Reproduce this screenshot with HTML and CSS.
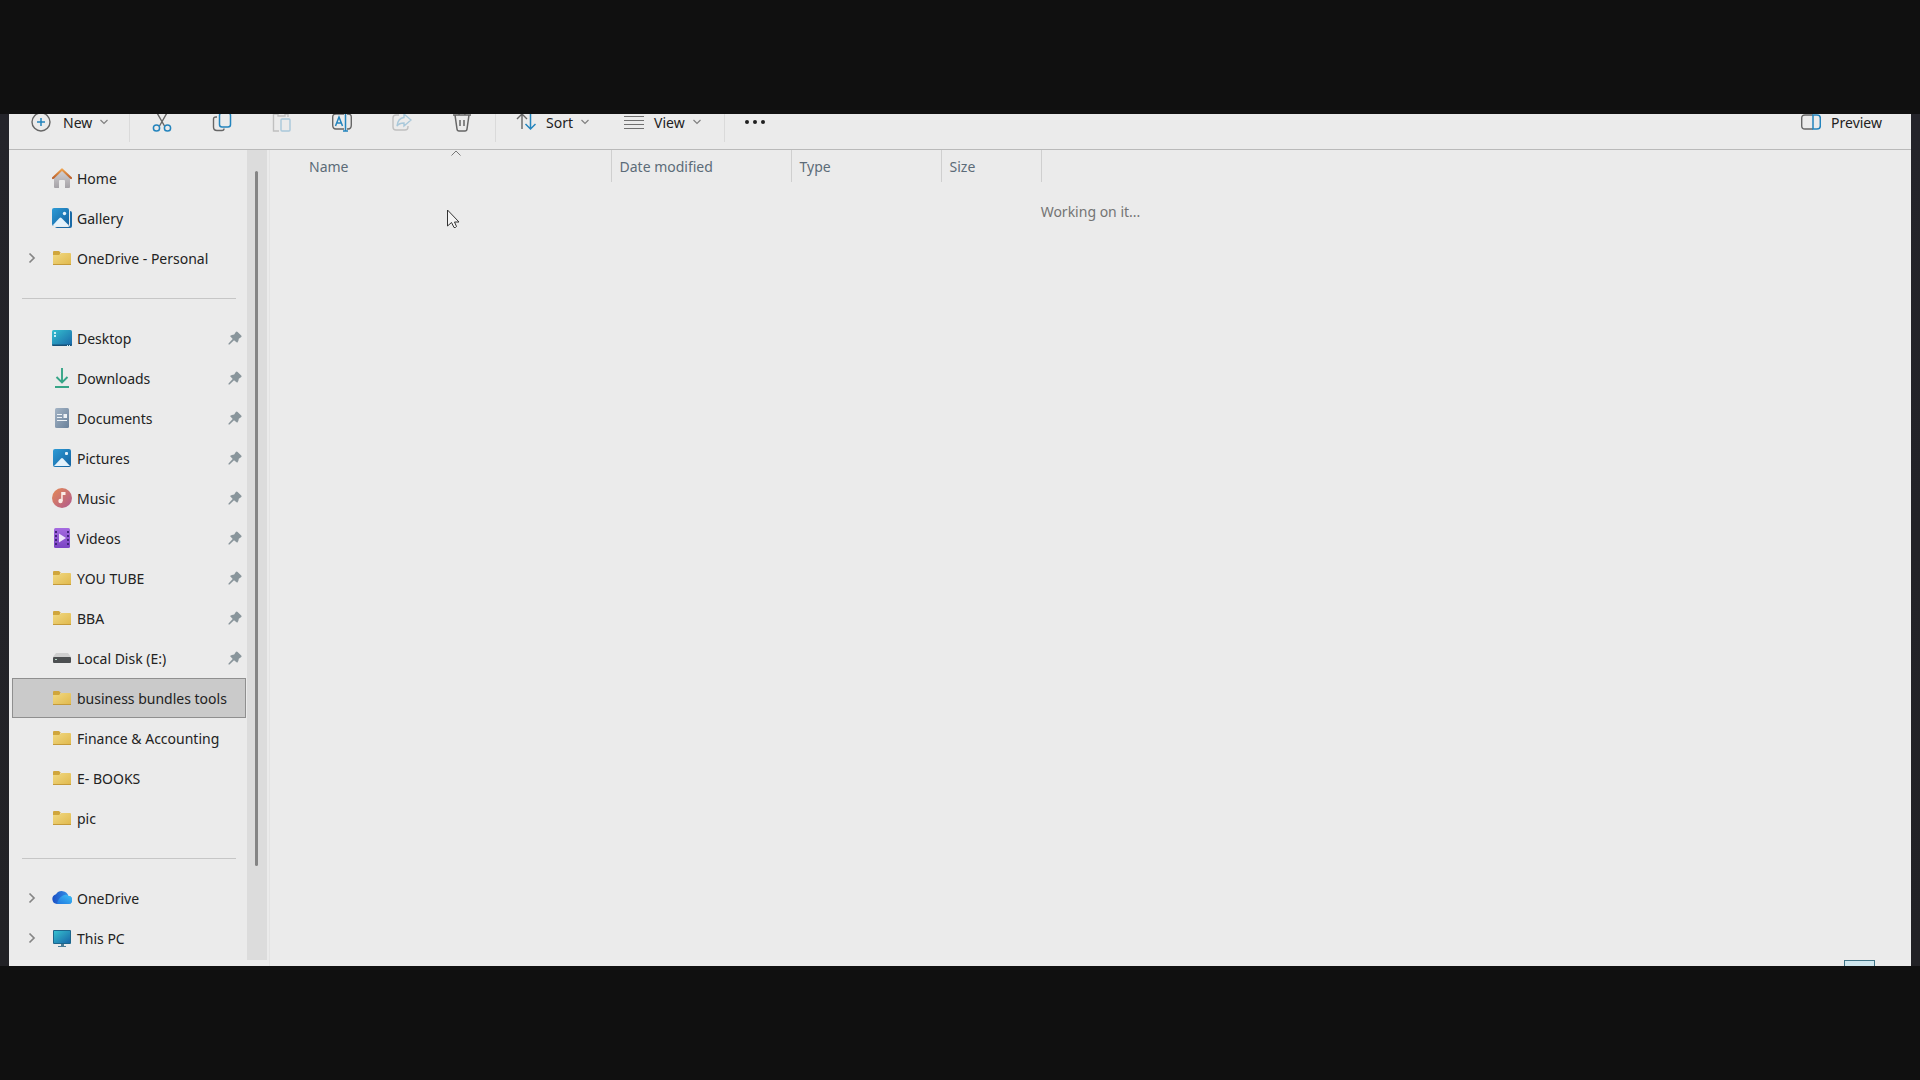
FILE: index.html
```html
<!DOCTYPE html>
<html lang="en">
<head>
<meta charset="utf-8">
<title>business bundles tools</title>
<link rel="stylesheet" href="styles.css">
</head>
<body>
<svg class="defs" aria-hidden="true">
  <defs>
    <linearGradient id="g-folder" x1="0" y1="0" x2="1" y2="1"><stop offset="0" stop-color="#f1d982"/><stop offset="1" stop-color="#e0b84c"/></linearGradient>
    <linearGradient id="g-blue" x1="0" y1="0" x2="1" y2="1"><stop offset="0" stop-color="#2d9bd6"/><stop offset="1" stop-color="#14619f"/></linearGradient>
    <linearGradient id="g-desk" x1="0" y1="0" x2="1" y2="1"><stop offset="0" stop-color="#35c0cf"/><stop offset="1" stop-color="#1866a8"/></linearGradient>
    <linearGradient id="g-wall" x1="0" y1="0" x2="0" y2="1"><stop offset="0" stop-color="#d4d2d4"/><stop offset="1" stop-color="#a5a2a7"/></linearGradient>
    <linearGradient id="g-roof" x1="0" y1="0" x2="0" y2="1"><stop offset="0" stop-color="#eda04c"/><stop offset="1" stop-color="#bb612c"/></linearGradient>
    <linearGradient id="g-doc" x1="0" y1="0" x2="1" y2="1"><stop offset="0" stop-color="#a4b4c5"/><stop offset="1" stop-color="#68809a"/></linearGradient>
    <linearGradient id="g-music" x1="0" y1="0" x2="1" y2="1"><stop offset="0" stop-color="#e58a54"/><stop offset="1" stop-color="#b05a8f"/></linearGradient>
    <linearGradient id="g-video" x1="0" y1="0" x2="0" y2="1"><stop offset="0" stop-color="#a56be0"/><stop offset="1" stop-color="#7a43c4"/></linearGradient>
    <linearGradient id="g-cloud" x1="0" y1="0" x2="1" y2="0"><stop offset="0" stop-color="#1a4fc4"/><stop offset="1" stop-color="#3aa0f0"/></linearGradient>
    <linearGradient id="g-cloud2" x1="0" y1="1" x2="1" y2="0"><stop offset="0" stop-color="#2176e0"/><stop offset="1" stop-color="#3cc0f5"/></linearGradient>
    <symbol id="folder" viewBox="0 0 20 20"><path d="M1 4q0-1 1-1h5l2 2h-1v4H1z" fill="#d0a63c"/><path d="M1 7h6l2-2h9q1 0 1 1v10q0 1-1 1H2q-1 0-1-1z" fill="url(#g-folder)"/><path d="M1 16.500h18" stroke="#c49a3a"/></symbol>
    <symbol id="home" viewBox="0 0 20 20"><path d="M2 9l8-7 8 7v10q0 1-1 1h-4v-7q0-1-1-1H8q-1 0-1 1v7H3q-1 0-1-1z" fill="url(#g-wall)"/><path d="M1 10l9-8.500L19 10" fill="none" stroke="url(#g-roof)" stroke-width="2.200" stroke-linecap="round" stroke-linejoin="round"/></symbol>
    <symbol id="gallery" viewBox="0 0 20 20"><path d="M18 3q2 0 2 2v13q0 2-2 2H5q-2 0-2-2z" fill="#1a6aa6"/><rect width="18" height="19" rx="2" fill="#ebebeb"/><rect width="17" height="18" rx="2" fill="url(#g-blue)"/><path d="M1 17l6.500-7q1-1 2 0l7 7-.5 1H1.500z" fill="#e4f2fb"/><circle cx="12.500" cy="5.500" r="1.700" fill="#e4f2fb"/></symbol>
    <symbol id="desktop" viewBox="0 0 20 20"><rect y="2" width="20" height="16" rx="1.500" fill="url(#g-desk)"/><path d="M0 16.500h20q0 1.500-1.500 1.500h-17q-1.500 0-1.500-1.500z" fill="#175077"/><path d="M2 4h2v2H2zM2 7h2v2H2zM15 17h1v1h-1zM17 17h1v1h-1z" fill="#c8eef5"/></symbol>
    <symbol id="downloads" viewBox="0 0 20 20"><path d="M10 0v14M4.500 9l5.500 5.500L15.500 9M3 19h14" fill="none" stroke="#36a587" stroke-width="1.900"/></symbol>
    <symbol id="documents" viewBox="0 0 20 20"><rect x="3" width="14" height="20" rx="1.500" fill="url(#g-doc)"/><path d="M5 6.500h5M5 9.500h5M5 12.500h10" stroke="#eef2f6"/><path d="M11.500 6H15v4h-3.500z" fill="#eef2f6"/></symbol>
    <symbol id="pictures" viewBox="0 0 20 20"><rect x="1" y="1" width="18" height="18" rx="2" fill="url(#g-blue)"/><path d="M2 18l7-7.500q1-1 2 0l7 7.500z" fill="#e4f2fb"/><rect x="13" y="4" width="3" height="3" rx="1" fill="#e4f2fb"/></symbol>
    <symbol id="music" viewBox="0 0 20 20"><circle cx="10" cy="10" r="10" fill="url(#g-music)"/><circle cx="8.500" cy="13" r="2.200" fill="#fbeee8"/><path d="M9.200 4h4.300v3h-2.800v6H9.200z" fill="#fbeee8"/></symbol>
    <symbol id="videos" viewBox="0 0 20 20"><rect x="2" width="16" height="20" rx="1.500" fill="url(#g-video)"/><path d="M4 3v16M16 3v16" stroke="#41247c" stroke-width="2" stroke-dasharray="2 2"/><path d="M7 5.500l7 4.500-7 4.500z" fill="#eee4fa"/></symbol>
    <symbol id="disk" viewBox="0 0 20 20"><path d="M4 5h12l3 4H1z" fill="#cfcfcf"/><rect x="1" y="9" width="18" height="6" rx="1" fill="#4c4f51"/><path d="M3 11.500h2" stroke="#b6d8c4"/></symbol>
    <symbol id="cloud" viewBox="0 0 20 20"><path d="M5 16a5 5 0 0 1-1-9.800A7 7 0 0 1 16.500 8 4 4 0 0 1 16 16z" fill="url(#g-cloud)"/><path d="M5 16q1-6 6-8.500Q14 6 16.500 8a4 4 0 0 1-.5 8z" fill="url(#g-cloud2)"/></symbol>
    <symbol id="pc" viewBox="0 0 20 20"><path d="M9 16h3v2h2v1H6v-1h3z" fill="#4c7d96"/><rect x="1" y="2" width="18" height="14" rx="1" fill="#1d668c"/><rect x="2" y="3" width="16" height="12" fill="url(#g-desk)"/></symbol>
    <symbol id="pin" viewBox="0 0 14 14"><path d="M7.800 1q.9-1 1.800 0l3.600 3.500q.9.900-.2 1.800L10.800 7.800q-.1 2.400-1.600 4L6 9.300 1.500 13.500H.5v-1L4.700 8 2 5q1.800-1.500 4.200-1.500z" fill="#89959b"/></symbol>
    <symbol id="right" viewBox="0 0 8 12"><path d="M1.500 1.500L6 6l-4.500 4.500" fill="none" stroke="#858585" stroke-width="1.700"/></symbol>
    <symbol id="down" viewBox="0 0 8 6"><path d="M.5 1L4 4.500 7.500 1" fill="none" stroke="#808080" stroke-width="1.200"/></symbol>
  </defs>
</svg>
<main class="window">
  <div class="toolbar" role="toolbar" aria-label="Commands">
    <button class="tool tool-new"><svg class="icon" viewBox="0 0 20 20"><circle cx="10" cy="10" r="9" fill="none" stroke="#666" stroke-width="1.400"/><path d="M10 6v8M6 10h8" stroke="#2384bd" stroke-width="1.500"/></svg><span class="label">New</span><svg class="down"><use href="#down"/></svg></button>
    <span class="rule"></span>
    <button class="tool tool-icon" aria-label="Cut"><svg class="icon" viewBox="0 0 20 20"><path d="M4.500 0l8 14M15.500 0l-8 14" stroke="#666" stroke-width="1.400"/><g fill="none" stroke="#2384bd" stroke-width="1.500"><circle cx="4.500" cy="16" r="3.100"/><circle cx="15.500" cy="16" r="3.100"/></g></svg></button>
    <button class="tool tool-icon" aria-label="Copy"><svg class="icon" viewBox="0 0 20 20"><path d="M5 5H4Q1.500 5 1.500 7v8q0 3.500 3.500 3.500h5q2 0 2-2" fill="none" stroke="#666" stroke-width="1.400"/><rect x="7.500" y="1" width="11" height="14" rx="2.500" fill="none" stroke="#2384bd" stroke-width="1.500"/></svg></button>
    <button class="tool tool-icon" aria-label="Paste" disabled><svg class="icon" viewBox="0 0 20 20"><path d="M6 2H1.500v17H7M6 1v3h7V1M13 2h3v3" fill="none" stroke="#c0c0c0" stroke-width="1.400"/><rect x="9" y="7" width="9" height="12" rx="1" fill="none" stroke="#a9c8da" stroke-width="1.400"/></svg></button>
    <button class="tool tool-icon" aria-label="Rename"><svg class="icon" viewBox="0 0 20 20"><path d="M12 2H4Q.7 2 .7 5v8q0 4 3.300 4h8M15 2h1q3.300 0 3.300 3v8q0 4-3.300 4h-1" fill="none" stroke="#666" stroke-width="1.400"/><path d="M3.500 14L7 5l3.500 9M4.700 11h4.600M13.500 1v18M11 19h5M11 1h5" fill="none" stroke="#2384bd" stroke-width="1.500"/></svg></button>
    <button class="tool tool-icon" aria-label="Share" disabled><svg class="icon" viewBox="0 0 20 20"><path d="M7 3H4Q1 3 1 6v9q0 3 3 3h9q3 0 3-3v-1" fill="none" stroke="#c0c0c0" stroke-width="1.400"/><path d="M12 2l7 6-7 6v-3q-5 0-7 3 1-8 7-8.500z" fill="none" stroke="#a9c8da" stroke-width="1.400"/></svg></button>
    <button class="tool tool-icon" aria-label="Delete"><svg class="icon" viewBox="0 0 20 20"><path d="M1 3h18M7 3q0-3 3-3t3 3M3 3l2 14q.2 2 2 2h6q1.800 0 2-2l2-14M8 8v6M12 8v6" fill="none" stroke="#666" stroke-width="1.500"/></svg></button>
    <span class="rule"></span>
    <button class="tool tool-sort"><svg class="icon" viewBox="0 0 20 20"><path d="M6 17V2M1 7l5-5 5 5" fill="none" stroke="#666" stroke-width="1.400"/><path d="M14.500 2v15M9.500 12l5 5 5-5" fill="none" stroke="#2384bd" stroke-width="1.500"/></svg><span class="label">Sort</span><svg class="down"><use href="#down"/></svg></button>
    <button class="tool tool-view"><svg class="icon" viewBox="0 0 20 20"><path d="M0 4.500h20M0 8.500h20M0 12.500h20M0 16.500h20" stroke="#707070"/></svg><span class="label">View</span><svg class="down"><use href="#down"/></svg></button>
    <span class="rule"></span>
    <button class="tool tool-more" aria-label="See more"><svg class="icon" viewBox="0 0 20 20"><g fill="#1f1f1f"><circle cx="2" cy="10" r="2"/><circle cx="10" cy="10" r="2"/><circle cx="18" cy="10" r="2"/></g></svg></button>
    <button class="tool tool-preview"><svg class="icon" viewBox="0 0 20 20"><path d="M12 3H4Q.7 3 .7 6v8q0 3 3.300 3h8" fill="none" stroke="#666" stroke-width="1.400"/><path d="M12 3h4q3.300 0 3.300 3v8q0 3-3.300 3h-4z" fill="none" stroke="#2384bd" stroke-width="1.500"/></svg><span class="label">Preview</span></button>
  </div>
  <div class="body">
    <nav class="sidebar" aria-label="Navigation">
      <ul class="tree">
        <li><a class="item" href="#"><span class="twist"></span><svg class="icon"><use href="#home"/></svg><span class="name">Home</span></a></li>
        <li><a class="item" href="#"><span class="twist"></span><svg class="icon"><use href="#gallery"/></svg><span class="name">Gallery</span></a></li>
        <li><a class="item" href="#"><svg class="twist"><use href="#right"/></svg><svg class="icon"><use href="#folder"/></svg><span class="name">OneDrive - Personal</span></a></li>
        <li class="divider"></li>
        <li><a class="item" href="#"><span class="twist"></span><svg class="icon"><use href="#desktop"/></svg><span class="name">Desktop</span><svg class="pin"><use href="#pin"/></svg></a></li>
        <li><a class="item" href="#"><span class="twist"></span><svg class="icon"><use href="#downloads"/></svg><span class="name">Downloads</span><svg class="pin"><use href="#pin"/></svg></a></li>
        <li><a class="item" href="#"><span class="twist"></span><svg class="icon"><use href="#documents"/></svg><span class="name">Documents</span><svg class="pin"><use href="#pin"/></svg></a></li>
        <li><a class="item" href="#"><span class="twist"></span><svg class="icon"><use href="#pictures"/></svg><span class="name">Pictures</span><svg class="pin"><use href="#pin"/></svg></a></li>
        <li><a class="item" href="#"><span class="twist"></span><svg class="icon"><use href="#music"/></svg><span class="name">Music</span><svg class="pin"><use href="#pin"/></svg></a></li>
        <li><a class="item" href="#"><span class="twist"></span><svg class="icon"><use href="#videos"/></svg><span class="name">Videos</span><svg class="pin"><use href="#pin"/></svg></a></li>
        <li><a class="item" href="#"><span class="twist"></span><svg class="icon"><use href="#folder"/></svg><span class="name">YOU TUBE</span><svg class="pin"><use href="#pin"/></svg></a></li>
        <li><a class="item" href="#"><span class="twist"></span><svg class="icon"><use href="#folder"/></svg><span class="name">BBA</span><svg class="pin"><use href="#pin"/></svg></a></li>
        <li><a class="item" href="#"><span class="twist"></span><svg class="icon"><use href="#disk"/></svg><span class="name">Local Disk (E:)</span><svg class="pin"><use href="#pin"/></svg></a></li>
        <li><a class="item selected" href="#" aria-current="page"><span class="twist"></span><svg class="icon"><use href="#folder"/></svg><span class="name">business bundles tools</span></a></li>
        <li><a class="item" href="#"><span class="twist"></span><svg class="icon"><use href="#folder"/></svg><span class="name">Finance &amp; Accounting</span></a></li>
        <li><a class="item" href="#"><span class="twist"></span><svg class="icon"><use href="#folder"/></svg><span class="name">E- BOOKS</span></a></li>
        <li><a class="item" href="#"><span class="twist"></span><svg class="icon"><use href="#folder"/></svg><span class="name">pic</span></a></li>
        <li class="divider"></li>
        <li><a class="item" href="#"><svg class="twist"><use href="#right"/></svg><svg class="icon"><use href="#cloud"/></svg><span class="name">OneDrive</span></a></li>
        <li><a class="item" href="#"><svg class="twist"><use href="#right"/></svg><svg class="icon"><use href="#pc"/></svg><span class="name">This PC</span></a></li>
      </ul>
      <div class="scrollbar"><div class="thumb"></div></div>
    </nav>
    <section class="files">
      <table class="columns">
        <colgroup><col class="col-name"><col class="col-date"><col class="col-type"><col class="col-size"></colgroup>
        <thead><tr>
          <th class="first" aria-sort="ascending"><button class="head">Name<svg class="caret" viewBox="0 0 10 6"><path d="M.5 5.500L5 1l4.500 4.500" fill="none" stroke="#777"/></svg></button></th>
          <th><button class="head">Date modified</button></th>
          <th><button class="head">Type</button></th>
          <th><button class="head">Size</button></th>
        </tr></thead>
      </table>
      <p class="status">Working on it...</p>
      <div class="foot"><button class="view-toggle" aria-label="Details view"></button></div>
    </section>
  </div>
</main>
<svg class="cursor" viewBox="0 0 13 20" aria-hidden="true"><path d="M.5 1v16l4-3.500 2.500 5q1.500.5 2.500-1L7.500 13h4.500z" fill="#f4f4f4" stroke="#333"/></svg>
</body>
</html>
```
FILE: styles.css
```css
* { box-sizing: border-box; }

body {
  margin: 0;
  height: 100vh;
  padding: 114px 9px;
  display: flex;
  background: linear-gradient(#101010 114px, #24242a 114px, #222226 calc(100% - 114px), #101010 calc(100% - 114px));
  font: 14px/20px "Noto Sans", "Open Sans", sans-serif;
  color: #222;
  overflow: hidden;
}

.defs { position: absolute; width: 0; height: 0; }

button { border: 0; padding: 0; background: none; font: inherit; color: inherit; }

.window {
  flex: 1;
  min-width: 0;
  display: flex;
  flex-direction: column;
  background: #ebebeb;
  overflow: hidden;
}

/* The command bar is scrolled partly out of view */
.toolbar {
  flex: none;
  display: flex;
  align-items: center;
  height: 56px;
  margin-top: -20px;
  border-bottom: 1px solid #b9b9b9;
}
.tool { display: flex; align-items: center; height: 40px; }
.icon { width: 20px; height: 20px; flex: none; }
.down { width: 8px; height: 6px; margin-left: 8px; }
.label { margin-left: 10px; padding-top: 2px; line-height: 14px; }
.rule { width: 1px; height: 40px; margin: 0 2px 0 3px; background: #dadada; }
.tool-new { width: 117px; padding-left: 22px; }
.tool-new .label { margin-left: 12px; }
.tool-icon { width: 60px; justify-content: center; }
.tool-sort { width: 108px; padding-left: 18px; }
.tool-view { width: 115px; padding-left: 18px; }
.tool-more { width: 56px; justify-content: center; }
.tool-preview { margin-left: auto; padding-right: 29px; }

.body { flex: 1; min-height: 0; display: flex; }

.sidebar { flex: none; width: 261px; display: flex; padding-bottom: 6px; border-right: 1px solid #e3e3e3; }
.tree { flex: 1; margin: 0; padding: 8px 1px 0 3px; list-style: none; }
.item {
  display: flex;
  align-items: center;
  height: 40px;
  padding: 0 3px 0 15px;
  border: 1px solid transparent;
  color: inherit;
  text-decoration: none;
}
.selected { background: #cacaca; border-color: #8f8f8f; }
.twist { width: 8px; height: 12px; margin-right: 16px; }
.name { margin-left: 5px; padding-top: 2px; white-space: nowrap; }
.pin { width: 14px; height: 14px; margin-left: auto; }
.divider { height: 40px; padding: 20px 10px 0; }
.divider::before { content: ""; display: block; height: 1px; background: #c6c6c6; }

.scrollbar { width: 20px; margin-right: 2px; padding: 21px 9px 94px 8px; background: #dcdcdc; }
.thumb { height: 100%; border-radius: 2px; background: #858585; }

.files { flex: 1; min-width: 0; display: flex; flex-direction: column; }
.columns { width: 771px; table-layout: fixed; border-collapse: collapse; color: #5c6b78; }
.col-name { width: 341px; }
.col-date { width: 180px; }
.col-type { width: 150px; }
.col-size { width: 100px; }
.columns th { height: 32px; padding: 0; border-right: 1px solid #cfcfcf; font-weight: 400; }
.columns .first { padding-left: 31px; }
.head { position: relative; display: block; width: 100%; height: 32px; padding: 2px 0 0 8px; text-align: left; }
.caret { position: absolute; top: 0; left: 50%; width: 10px; height: 6px; margin-left: -5px; }
.status { margin: 20px 0 0; text-align: center; color: #747474; }
.foot { display: flex; justify-content: flex-end; height: 6px; margin-top: auto; padding-right: 36px; }
.view-toggle { width: 31px; height: 24px; flex: none; background: #cfe6ee; border: 1px solid #3f7385; }

.cursor { position: absolute; left: 447px; top: 209px; width: 13px; height: 20px; }
```
